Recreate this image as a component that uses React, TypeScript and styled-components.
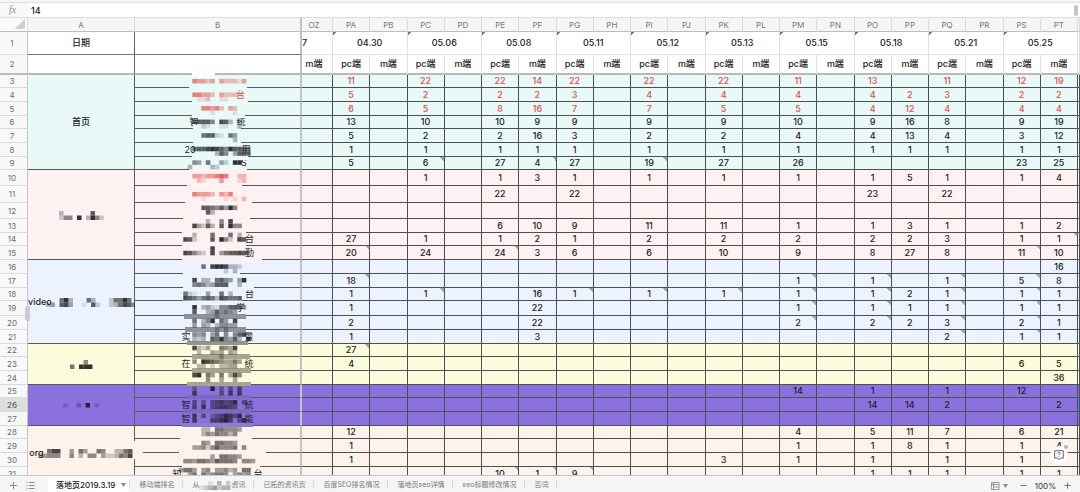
import React from "react";
import styled, { createGlobalStyle } from "styled-components";

const GlobalStyle = createGlobalStyle`
  * { box-sizing: border-box; }
  html, body, #root { height: 100%; margin: 0; }
  body {
    font-family: Inter, "Noto Sans CJK SC", sans-serif;
    font-size: 9px;
    line-height: 12px;
    color: #222;
    background: #fff;
    overflow: hidden;
  }
  button, input { font: inherit; color: inherit; border: 0; background: none; padding: 0; margin: 0; }
`;

const Page = styled.div`
  display: flex;
  flex-direction: column;
  height: 100vh;
  position: relative;
`;

const TopStrip = styled.div`
  flex: none;
  height: 3px;
  background: #f5f5f5;
  border-bottom: 1px solid #dedede;
`;

const FormulaBar = styled.label`
  flex: none;
  display: flex;
  align-items: center;
  height: 15px;
  border-bottom: 1px solid #dcdcdc;
`;

const FxMark = styled.span`
  width: 28px;
  height: 14px;
  padding-right: 3px;
  text-align: center;
  font: italic 10px/13px "Liberation Serif", serif;
  color: #8c8c8c;
  background: #f8f8f8;
`;

const FormulaInput = styled.input`
  flex: 1;
  height: 14px;
  padding: 0 3px;
  font-weight: 500;
  outline: 0;
`;

const ScrollThumb = styled.span`
  width: 4px;
  height: 11px;
  margin-right: 2px;
  border-radius: 2px;
  background: #c4c4c4;
`;

const SheetArea = styled.main`
  flex: 1;
  min-height: 0;
  overflow: hidden;
  position: relative;
`;

const Grid = styled.table`
  width: 100%;
  table-layout: fixed;
  border-collapse: separate;
  border-spacing: 0;
`;

const Col = styled.col<{ $w?: number }>`
  width: ${(p) => (p.$w ? `${p.$w}px` : "auto")};
`;

const Row = styled.tr<{ $h: number }>`
  height: ${(p) => p.$h}px;
`;

const ColHead = styled.th<{ $frozen?: boolean; $cut?: boolean }>`
  padding: 1px ${(p) => (p.$cut ? 6 : 0)}px 0 0;
  font-size: 8px;
  font-weight: 400;
  color: #777;
  background: #f6f6f6;
  border-right: ${(p) => (p.$frozen ? "2px solid #c2c2c2" : "1px solid #dcdcdc")};
  border-bottom: 1px solid #bdbdbd;
`;

const Corner = styled(ColHead)`
  background: linear-gradient(135deg, transparent 50%, #d2d2d2 50%) right 2px bottom 2px / 10px 10px no-repeat, #fafafa;
`;

const RowHead = styled.th<{ $active?: boolean; $last?: boolean }>`
  padding: 0 3px 0 0;
  font-size: 8px;
  font-weight: ${(p) => (p.$active ? 600 : 400)};
  color: #6d6d6d;
  background: ${(p) => (p.$active ? "#dedede" : "#f8f8f8")};
  border-right: 1px solid #c6c6c6;
  border-bottom: ${(p) => (p.$last ? "2px solid #bdbdbd" : "1px solid #dadada")};
`;

const TitleCell = styled.td<{ $frozen?: boolean; $last?: boolean }>`
  padding: 0;
  text-align: center;
  font-weight: 500;
  border-right: ${(p) => (p.$frozen ? "2px solid #c2c2c2" : "1px solid #5f5f5f")};
  border-bottom: ${(p) => (p.$last ? "2px solid #b8b8b8" : "1px solid #777")};
`;

const DateCell = styled.td<{ $flag?: boolean; $last?: boolean; $cut?: boolean }>`
  padding: 0 ${(p) => (p.$cut ? 6 : 0)}px 0 0;
  text-align: center;
  font-weight: 500;
  white-space: nowrap;
  overflow: hidden;
  border-right: 1px solid #e2e2e2;
  border-bottom: ${(p) => (p.$last ? "2px solid #b8b8b8" : "1px solid #e2e2e2")};
  background: ${(p) =>
    p.$flag ? "linear-gradient(135deg, #6f7d63 50%, transparent 50%) 0 0 / 4px 4px no-repeat" : "none"};
`;

const CutDate = styled(DateCell)`
  text-align: left;
`;

const GroupCell = styled.td<{ $bg: string }>`
  padding: 0;
  text-align: center;
  font-weight: 500;
  white-space: nowrap;
  background: ${(p) => p.$bg};
  border-right: 1px solid #5c5c60;
  border-bottom: 1px solid #55555c;
`;

const NameCell = styled.td<{ $bg: string; $red: boolean }>`
  position: relative;
  padding: 0;
  text-align: center;
  white-space: nowrap;
  color: ${(p) => (p.$red ? "#e2504a" : "#222")};
  background: ${(p) => p.$bg};
  border-right: 2px solid #c2c2c2;
  border-bottom: 1px solid #55585c;
`;

const ValueCell = styled.td<{ $bg: string; $red: boolean; $note: boolean; $picked?: boolean }>`
  padding: 0;
  text-align: center;
  font-weight: 500;
  color: ${(p) => (p.$red ? "#e2504a" : "#222")};
  background: ${(p) =>
    p.$note ? `linear-gradient(45deg, transparent 50%, #a2a5aa 50%) right top / 4px 4px no-repeat, ${p.$bg}` : p.$bg};
  border-right: 1px solid #4c5054;
  border-bottom: 1px solid #4c5054;
  box-shadow: ${(p) => (p.$picked ? "inset 0 0 0 1px #4a8af0" : "none")};
`;

const Hidden = styled.span<{ $w: number }>`
  display: inline-block;
  width: ${(p) => p.$w}px;
`;

const InlineMosaic = styled.svg<{ $overlap: boolean }>`
  vertical-align: middle;
  margin-left: ${(p) => (p.$overlap ? -6 : 0)}px;
`;

const ColumnMosaic = styled.svg`
  position: absolute;
  left: 0;
  top: 0;
  z-index: 1;
  overflow: visible;
  pointer-events: none;
`;

const DragHandle = styled.span`
  position: absolute;
  left: 25px;
  top: 288px;
  width: 5px;
  height: 15px;
  border-radius: 3px 0 0 3px;
  background: #c9cdd0;
`;

const HelpButton = styled.button`
  position: absolute;
  right: 12px;
  bottom: 28px;
  width: 18px;
  height: 18px;
  border-radius: 50%;
  background: #fff;
  display: flex;
  align-items: center;
  justify-content: center;
  z-index: 2;
`;

const HelpDot = styled.i`
  position: absolute;
  right: 0;
  top: -1px;
  width: 4px;
  height: 4px;
  border-radius: 50%;
  background: #a9b1e0;
`;

const Footer = styled.footer`
  flex: none;
  display: flex;
  align-items: stretch;
  height: 17px;
  background: #f5f5f5;
  border-top: 1px solid #c9c9c9;
  color: #7a7a7a;
`;

const SheetTools = styled.div`
  display: flex;
  align-items: center;
  gap: 8px;
  width: 48px;
  padding: 2px 0 0 9px;
`;

const IconButton = styled.button`
  display: flex;
  align-items: center;
`;

const Tab = styled.button<{ $active?: boolean }>`
  position: relative;
  display: flex;
  align-items: center;
  justify-content: center;
  gap: 6px;
  padding: ${(p) => (p.$active ? "2px 4px 0 8px" : "2px 9px 0")};
  font-size: ${(p) => (p.$active ? 8 : 7)}px;
  font-weight: ${(p) => (p.$active ? 500 : 400)};
  color: ${(p) => (p.$active ? "#222" : "#777")};
  background: ${(p) => (p.$active ? "#fff" : "transparent")};
  white-space: nowrap;
  &::after {
    content: "";
    position: absolute;
    right: 0;
    top: 4px;
    bottom: 3px;
    width: 1px;
    background: #d8d8d8;
  }
`;

const ZoomTools = styled.div`
  display: flex;
  align-items: center;
  gap: 8px;
  margin-left: auto;
  padding: 3px 9px 0 0;
  font-size: 8px;
  color: #333;
`;

const ViewButton = styled(IconButton)`
  gap: 3px;
  margin-right: 4px;
`;

type Cells = string[];

const INK = "#1c1c20";

/* Digits are the strength of one block, letters a-e the strength of a red one. */
function blockPaint(ch: string): { fill: string; opacity: number } | null {
  if (ch >= "1" && ch <= "9") return { fill: INK, opacity: Number(ch) / 10 };
  if (ch >= "a" && ch <= "e") return { fill: "#e0433f", opacity: (ch.charCodeAt(0) - 96) / 6 };
  return null;
}

function Blocks({ rows, x, y, w, h }: { rows: Cells; x: number; y: number; w: number; h: number }) {
  return (
    <g>
      {rows.flatMap((line, j) =>
        line.split("").map((ch, i) => {
          const p = blockPaint(ch);
          return p ? <rect key={`${j}-${i}`} x={x + i * w} y={y + j * h} width={w} height={h} fill={p.fill} fillOpacity={p.opacity} /> : null;
        })
      )}
    </g>
  );
}

function Mosaic({ rows, overlap = false }: { rows: Cells; overlap?: boolean }) {
  const width = Math.ceil(rows[0].length * 4.5);
  return (
    <InlineMosaic $overlap={overlap} width={width} height={rows.length * 4.5} aria-hidden="true">
      <Blocks rows={rows} x={0} y={0} w={4.5} h={4.5} />
    </InlineMosaic>
  );
}

const CYAN = "#e8f9f8";
const PINK = "#fef1f1";
const BLUE = "#ecf3fe";
const YELLOW = "#fcfedb";
const PURPLE = "#8b71de";
const CREAM = "#fef3ea";

/* Blank areas behind the blocks: x, y, width, height, fill. */
const patches: [number, number, number, number, string][] = [
  [57, -2, 23, 6, "#fbfefe"],
  [54, 10, 58, 5, CYAN],
  [57, 24, 56, 6, CYAN],
  [57, 37, 53, 6, CYAN],
  [58, 50, 48, 6, CYAN],
  [58, 65, 48, 5, CYAN],
  [57, 79, 56, 6, CYAN],
  [54, 93, 58, 3, PINK],
  [52, 107, 55, 7, PINK],
  [50, 124, 67, 6, PINK],
  [48, 141, 67, 5, PINK],
  [47, 154, 64, 6, PINK],
  [47, 168, 64, 5, PINK],
  [47, 182, 80, 6, "#f5f2f8"],
  [48, 196, 57, 5, BLUE],
  [48, 210, 71, 5, BLUE],
  [48, 222, 59, 6, BLUE],
  [49, 239, 62, 5, "#8d929c"],
  [50, 252, 61, 5, "#8d929c"],
  [52, 266, 61, 4, "#92968f"],
  [57, 279, 58, 5, "#a6a68e"],
  [57, 293, 59, 5, "#a6a68e"],
  [52, 307, 64, 4, "#a6a590"],
  [52, 320, 64, 4, "#7d69bf"],
  [50, 334, 66, 4, "#7d69bf"],
  [47, 348, 71, 4, "#8f7bd0"],
  [45, 361, 72, 5, CREAM],
  [44, 375, 87, 5, CREAM],
  [47, 389, 78, 5, CREAM],
  [-2, 366, 10, 18, CREAM],
];

/* Index of the first block line, then the lines. */
const columnBlocks: [number, Cells][] = [
  [0, ["...dccbc.cbbbac..."]],
  [3, ["...ddccb.cbbba....", "....aab..aa......."]],
  [6, [".....ddcdb.cb.....", ".......a....a....."]],
  [9, ["...67775.873.2....", ".....21..11..3...."]],
  [12, [".....67721.64.....", "............3....."]],
  [15, ["...6778987597764..", "........375.4776.."]],
  [18, ["...54.6..42.99....", "..3....32........."]],
  [21, ["...ccbccded..bb...", "....ba...c...ab..."]],
  [25, ["...dcccb.cbd......", ".....a....a.a.b..."]],
  [28, [".....77657495.....", "......73.........."]],
  [31, ["......3..5.8......", "...84273.7.955...."]],
  [34, ["...3...6...6.3....", ".872...7.952.87..."]],
  [37, [".......8..........", ".87532.8.467787..."]],
  [41, [".....6.8998332....", "..........2.3....."]],
  [44, ["...8.33.6754.49...", "...56534777..3...."]],
  [47, [".621..4..6.3......", ".8764676387667...."]],
  [50, ["...9.3421557764...", "...7..3475654.....", "........3.........", "...6.359.64.8.....", "...4.43.35544.....", "........3.3.......", "...545.46.5.578...", "...323.7695473.8.."]],
  [59, ["...8324..6548.....", "....3..434.43.....", ".........3........", "...5.987654464....", "....33.2.3344....."]],
  [65, ["...89.64.6.485....", "......5..4..4....."]],
  [68, ["...4...9.4.5.6....", "...7.....5.7.7...."]],
  [71, ["...5.4.567568.5...", "...6.7.567765....."]],
  [74, ["...7.5.3568758....", "...7...66896.58..."]],
  [77, [".....33.665554....", ".....35465535....."]],
  [80, [".....54.66554.....", "...4452575556.5..."]],
  [83, [".......4.66554....", ".554665476665.554."]],
  [86, ["4664.45.44534.66..", "..46.645665.4545.."]],
];

function NameMosaic() {
  return (
    <ColumnMosaic width="167" height="405" aria-hidden="true">
      {patches.map(([x, y, w, h, fill], i) => (
        <rect key={i} x={x} y={y} width={w} height={h} fill={fill} />
      ))}
      {columnBlocks.map(([j, rows]) => (
        <Blocks key={j} rows={rows} x={43.8} y={3.9 + j * 4.523} w={4.5} h={4.53} />
      ))}
    </ColumnMosaic>
  );
}

interface SheetRow {
  n: number;
  h: number;
  vals?: string;
  notes?: string;
  name?: [string, number, string];
  red?: boolean;
}

interface Group {
  bg: string;
  label: React.ReactNode;
  rows: SheetRow[];
}

const columns = ["PA", "PB", "PC", "PD", "PE", "PF", "PG", "PH", "PI", "PJ", "PK", "PL", "PM", "PN", "PO", "PP", "PQ", "PR", "PS", "PT"];
const dates = ["04.30", "05.06", "05.08", "05.11", "05.12", "05.13", "05.15", "05.18", "05.21", "05.25"];

const groups: Group[] = [
  {
    bg: CYAN,
    label: "首页",
    rows: [
      { n: 3, h: 13, red: true, vals: "11,,22,,22,14,22,,22,,22,,11,,13,,11,,12,19" },
      { n: 4, h: 14, red: true, vals: "5,,2,,2,2,3,,4,,4,,4,,4,2,3,,2,2", name: ["", 46, "台"] },
      { n: 5, h: 14, red: true, vals: "6,,5,,8,16,7,,7,,5,,5,,4,12,4,,4,4" },
      { n: 6, h: 13, vals: "13,,10,,10,9,9,,9,,9,,10,,9,16,8,,9,19", name: ["智", 38, "统"] },
      { n: 7, h: 14, vals: "5,,2,,2,16,3,,2,,2,,4,,4,13,4,,3,12" },
      { n: 8, h: 14, vals: "1,,1,,1,1,1,,1,,1,,1,,1,1,1,,1,1", name: ["20", 46, "用"] },
      { n: 9, h: 13, vals: "5,,6,,27,4,27,,19,,27,,26,,,,,,23,25", notes: "PC PF PI", name: ["", 53, "S"] },
    ],
  },
  {
    bg: PINK,
    label: <Mosaic rows={["3......7..", "255.9.3952"]} />,
    rows: [
      { n: 10, h: 16, vals: ",,1,,1,3,1,,1,,1,,1,,1,5,1,,1,4" },
      { n: 11, h: 17, vals: ",,,,22,,22,,,,,,,,23,,22" },
      { n: 12, h: 16 },
      { n: 13, h: 14, vals: ",,,,6,10,9,,11,,11,,1,,1,3,1,,1,2" },
      { n: 14, h: 13, vals: "27,,1,,1,2,1,,2,,2,,2,,2,2,3,,1,1", notes: "PT", name: ["", 64, "台"] },
      { n: 15, h: 14, vals: "20,,24,,24,3,6,,6,,10,,9,,8,27,8,,11,10", notes: "PA PE PS", name: ["", 64, "勤"] },
    ],
  },
  {
    bg: BLUE,
    label: (
      <>
        video
        <Mosaic overlap rows={["...693...63...26696.", "34.784..1.72..236875"]} />
      </>
    ),
    rows: [
      { n: 16, h: 14, vals: ",,,,,,,,,,,,,,,,,,,16" },
      { n: 17, h: 14, vals: "18,,,,,,,,,,,,1,,1,,1,,5,8", notes: "PA PM PO PQ PS" },
      { n: 18, h: 13, vals: "1,,1,,,16,1,,1,,1,,1,,1,2,1,,1,1", notes: "PC PG PI PK PM PO PQ PS", name: ["", 64, "台"] },
      { n: 19, h: 15, vals: "1,,,,,22,,,,,,,1,,1,1,1,,1,1", notes: "PM PO PQ PS", name: ["", 46, "学"] },
      { n: 20, h: 14, vals: "2,,,,,22,,,,,,,2,,2,2,3,,2,1", notes: "PM PO PQ PS" },
      { n: 21, h: 14, vals: "1,,,,,3,,,,,,,,,,,2,,1,1", notes: "PQ PS", name: ["实", 54, "景"] },
    ],
  },
  {
    bg: YELLOW,
    label: <Mosaic rows={["...5.", "6.999"]} />,
    rows: [
      { n: 22, h: 13, vals: "27", notes: "PA" },
      { n: 23, h: 14, vals: "4,,,,,,,,,,,,,,,,,,6,5", name: ["在", 54, "统"] },
      { n: 24, h: 14, vals: ",,,,,,,,,,,,,,,,,,,36" },
    ],
  },
  {
    bg: PURPLE,
    label: <Mosaic rows={["2..3.9.2"]} />,
    rows: [
      { n: 25, h: 13, vals: ",,,,,,,,,,,,14,,1,,1,,12" },
      { n: 26, h: 14, vals: ",,,,,,,,,,,,,,14,14,2,,,2", name: ["智", 54, "统"] },
      { n: 27, h: 14, name: ["智", 54, "能"] },
    ],
  },
  {
    bg: CREAM,
    label: (
      <>
        org
        <Mosaic overlap rows={["..688..4.64..65..3367", "34555..5.3.55.4223658"]} />
      </>
    ),
    rows: [
      { n: 28, h: 13, vals: "12,,,,,,,,,,,,4,,5,11,7,,6,21" },
      { n: 29, h: 14, vals: "1,,,,,,,,,,,,1,,1,8,1,,1,4" },
      { n: 30, h: 14, vals: "1,,,,,,,,,,3,,1,,1,,1,,1,1" },
      { n: 31, h: 14, vals: ",,,,10,1,9,,,,,,,,1,1,1,,1,1", notes: "PE PF PG", name: ["知", 72, "台"] },
    ],
  },
];

const tabs = ["移动端排名", "", "已拓的资讯页", "百度SEO排名情况", "落地页seo详情", "seo标题修改情况", "否词"];

function Caret() {
  return (
    <svg width="5" height="4" viewBox="0 0 5 4" aria-hidden="true">
      <path d="M0 0h5L2.500 4z" fill="#888" />
    </svg>
  );
}

function BodyRow({ row, group, first }: { row: SheetRow; group: Group; first: boolean }) {
  const vals = (row.vals ?? "").split(",");
  const notes = (row.notes ?? "").split(" ");
  const red = !!row.red;
  return (
    <Row $h={row.h}>
      <RowHead scope="row" $active={row.n === 26}>{row.n}</RowHead>
      {first && <GroupCell $bg={group.bg} rowSpan={group.rows.length}>{group.label}</GroupCell>}
      <NameCell $bg={group.bg} $red={red}>
        {row.name && (
          <>
            {row.name[0]}
            <Hidden $w={row.name[1]} />
            {row.name[2]}
          </>
        )}
        {row.n === 3 && <NameMosaic />}
      </NameCell>
      <ValueCell $bg={group.bg} $red={red} $note={false} />
      {columns.map((c, i) => (
        <ValueCell key={c} $bg={group.bg} $red={red} $note={notes.includes(c)}>{vals[i]}</ValueCell>
      ))}
      <ValueCell $bg={group.bg} $red={red} $note={false} $picked={row.n === 26} />
    </Row>
  );
}

export default function App() {
  return (
    <Page>
      <GlobalStyle />
      <TopStrip />
      <FormulaBar>
        <FxMark>fx</FxMark>
        <FormulaInput defaultValue="14" />
        <ScrollThumb />
      </FormulaBar>
      <SheetArea>
        <Grid>
          <colgroup>
            <Col $w={28} />
            <Col $w={107} />
            <Col $w={167} />
            <Col $w={31} />
            {columns.map((c) => (
              <Col key={c} />
            ))}
            <Col $w={2} />
          </colgroup>
          <thead>
            <Row $h={14}>
              <Corner />
              <ColHead scope="col">A</ColHead>
              <ColHead scope="col" $frozen>B</ColHead>
              <ColHead scope="col" $cut>OZ</ColHead>
              {columns.map((c) => (
                <ColHead key={c} scope="col">{c}</ColHead>
              ))}
              <ColHead />
            </Row>
          </thead>
          <tbody>
            <Row $h={23}>
              <RowHead scope="row">1</RowHead>
              <TitleCell>日期</TitleCell>
              <TitleCell $frozen />
              <CutDate>7</CutDate>
              {dates.map((d) => (
                <DateCell key={d} colSpan={2} $flag>{d}</DateCell>
              ))}
              <DateCell />
            </Row>
            <Row $h={20}>
              <RowHead scope="row" $last>2</RowHead>
              <TitleCell $last />
              <TitleCell $frozen $last />
              <DateCell $last $cut>m端</DateCell>
              {columns.map((c, i) => (
                <DateCell key={c} $last>{i % 2 ? "m端" : "pc端"}</DateCell>
              ))}
              <DateCell $last />
            </Row>
            {groups.map((g) =>
              g.rows.map((r, i) => <BodyRow key={r.n} row={r} group={g} first={i === 0} />)
            )}
          </tbody>
        </Grid>
        <DragHandle />
      </SheetArea>
      <Footer>
        <SheetTools>
          <IconButton aria-label="新建工作表">
            <svg width="9" height="9" viewBox="0 0 9 9" stroke="#888">
              <path d="M4.500 1v7M1 4.500h7" />
            </svg>
          </IconButton>
          <IconButton aria-label="所有工作表">
            <svg width="9" height="9" viewBox="0 0 9 9" stroke="#888">
              <path d="M0.500 1.500h1M3 1.500h5.500M0.500 4.500h1M3 4.500h5.500M0.500 7.500h1M3 7.500h5.500" />
            </svg>
          </IconButton>
        </SheetTools>
        <Tab $active>
          落地页2019.3.19
          <Caret />
        </Tab>
        {tabs.map((t, i) => (
          <Tab key={i}>
            {t || (
              <span>
                从
                <Mosaic rows={["..1.3.2", "1234233"]} />
                资讯
              </span>
            )}
          </Tab>
        ))}
        <ZoomTools>
          <ViewButton aria-label="视图">
            <svg width="9" height="8" viewBox="0 0 9 8" fill="none" stroke="#777">
              <path d="M0.500 0.500h7.500v7h-7.500zM2.500 0.500v7M0.500 2.500h7.500M2.500 5h5.500" strokeWidth="0.700" />
            </svg>
            <Caret />
          </ViewButton>
          <IconButton aria-label="缩小">
            <svg width="7" height="7" viewBox="0 0 7 7" stroke="#777">
              <path d="M0.500 3.500h6" />
            </svg>
          </IconButton>
          <span>100%</span>
          <IconButton aria-label="放大">
            <svg width="7" height="7" viewBox="0 0 7 7" stroke="#777">
              <path d="M3.500 0.500v6M0.500 3.500h6" />
            </svg>
          </IconButton>
        </ZoomTools>
      </Footer>
      <HelpButton aria-label="帮助">
        <svg width="10" height="10" viewBox="0 0 10 10" fill="none" stroke="#555" strokeWidth="0.900">
          <path d="M0.700 0.700h8.600v7.400h-2.600l-1.700 1.400-1.700-1.400h-2.600z" />
          <path d="M3.700 3.600c0-1.700 2.600-1.700 2.600 0 0 0.900-1.300 0.900-1.300 1.800M5 6.300v0.700" />
        </svg>
        <HelpDot />
      </HelpButton>
    </Page>
  );
}
